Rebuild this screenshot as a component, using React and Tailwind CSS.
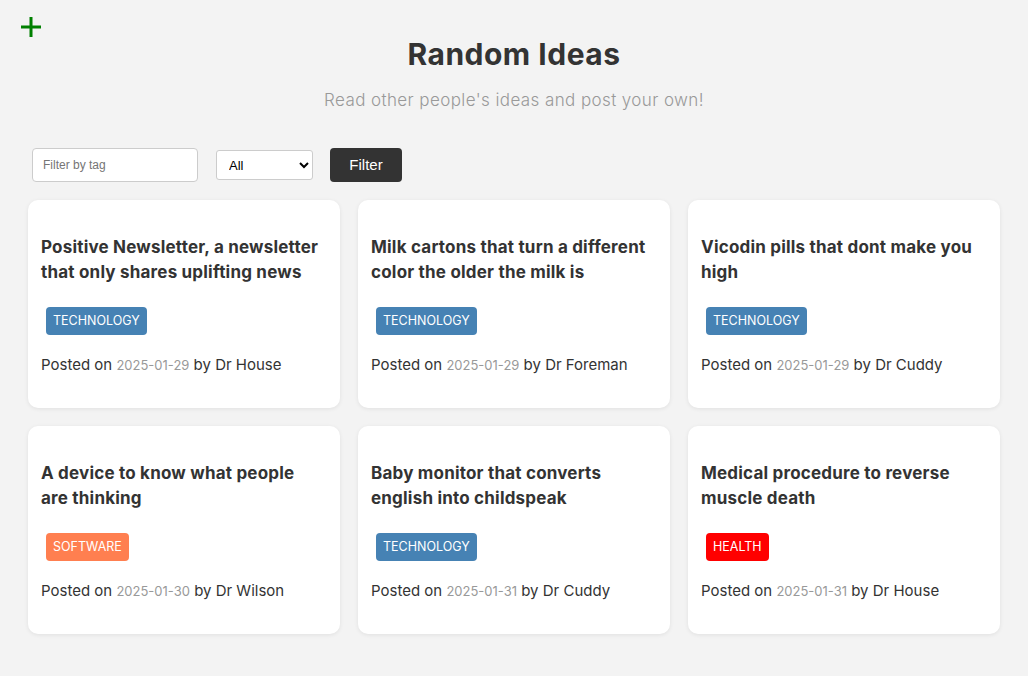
import React from "react";

const ideas = [
  { id: 1, text: "Positive Newsletter, a newsletter that only shares uplifting news", tag: "technology", date: "2025-01-29", user: "Dr House" },
  { id: 2, text: "Milk cartons that turn a different color the older the milk is", tag: "technology", date: "2025-01-29", user: "Dr Foreman" },
  { id: 3, text: "Vicodin pills that dont make you high", tag: "technology", date: "2025-01-29", user: "Dr Cuddy" },
  { id: 4, text: "A device to know what people are thinking", tag: "software", date: "2025-01-30", user: "Dr Wilson" },
  { id: 5, text: "Baby monitor that converts english into childspeak", tag: "technology", date: "2025-01-31", user: "Dr Cuddy" },
  { id: 6, text: "Medical procedure to reverse muscle death", tag: "health", date: "2025-01-31", user: "Dr House" },
];

const tagColors = {
  technology: "bg-[#4682b4]",
  software: "bg-[#ff7f50]",
  health: "bg-[#ff0000]",
};

function IdeaCard({ idea }) {
  return (
    <div className="bg-white rounded-[10px] shadow-[0_1px_4px_rgba(0,0,0,0.08)] pl-[13px] pr-[18px] pt-[35px] pb-[30px] h-[208px]">
      <h3 className="text-[17px] font-bold leading-[25px] text-[#333] tracking-[0.2px]">
        {idea.text}
      </h3>
      <span
        className={`inline-block mt-[22px] ml-[5px] ${tagColors[idea.tag]} text-white text-[12.5px] uppercase leading-[28px] px-[7px] rounded-[4px]`}
      >
        {idea.tag}
      </span>
      <p className="mt-[20px] text-[15px] text-[#333] leading-[20px]">
        Posted on <span className="text-[13px] text-[#999]">{idea.date}</span> by {idea.user}
      </p>
    </div>
  );
}

export default function App() {
  return (
    <div
      className="min-h-screen bg-[#f3f3f3] relative"
      style={{ fontFamily: "Inter, 'Open Sans', sans-serif" }}
    >
      <button className="absolute left-[20px] top-[16px] w-[22px] h-[22px] flex items-center justify-center">
        <svg width="22" height="22" viewBox="0 0 22 22">
          <path d="M11 1v20M1 11h20" stroke="#008000" strokeWidth="3" />
        </svg>
      </button>

      <header className="pt-[36px] text-center">
        <h1 className="text-[30px] font-bold text-[#333] leading-[36px] tracking-[0.5px]">Random Ideas</h1>
        <p className="mt-[16px] text-[17px] font-light text-[#999] leading-[24px] tracking-[0.4px]">
          Read other people's ideas and post your own!
        </p>
      </header>

      <div className="mx-[28px] mt-[36px]">
        <div
          className="flex items-center pl-[4px] h-[34px]"
          style={{ fontFamily: "Arial, 'Liberation Sans', sans-serif" }}
        >
          <input
            type="text"
            placeholder="Filter by tag"
            className="w-[166px] h-[34px] border border-[#ccc] rounded-[4px] bg-white px-[10px] text-[12px] placeholder:text-[#757575] outline-none"
          />
          <select className="ml-[18px] w-[97px] h-[30px] border border-[#ccc] rounded-[3px] bg-white pl-[8px] text-[13px] text-black">
            <option>All</option>
          </select>
          <button className="ml-[17px] w-[72px] h-[34px] bg-[#333] text-white text-[15px] rounded-[4px]">
            Filter
          </button>
        </div>

        <div className="grid grid-cols-3 gap-[18px] mt-[18px]">
          {ideas.map((idea) => (
            <IdeaCard key={idea.id} idea={idea} />
          ))}
        </div>
      </div>
    </div>
  );
}
